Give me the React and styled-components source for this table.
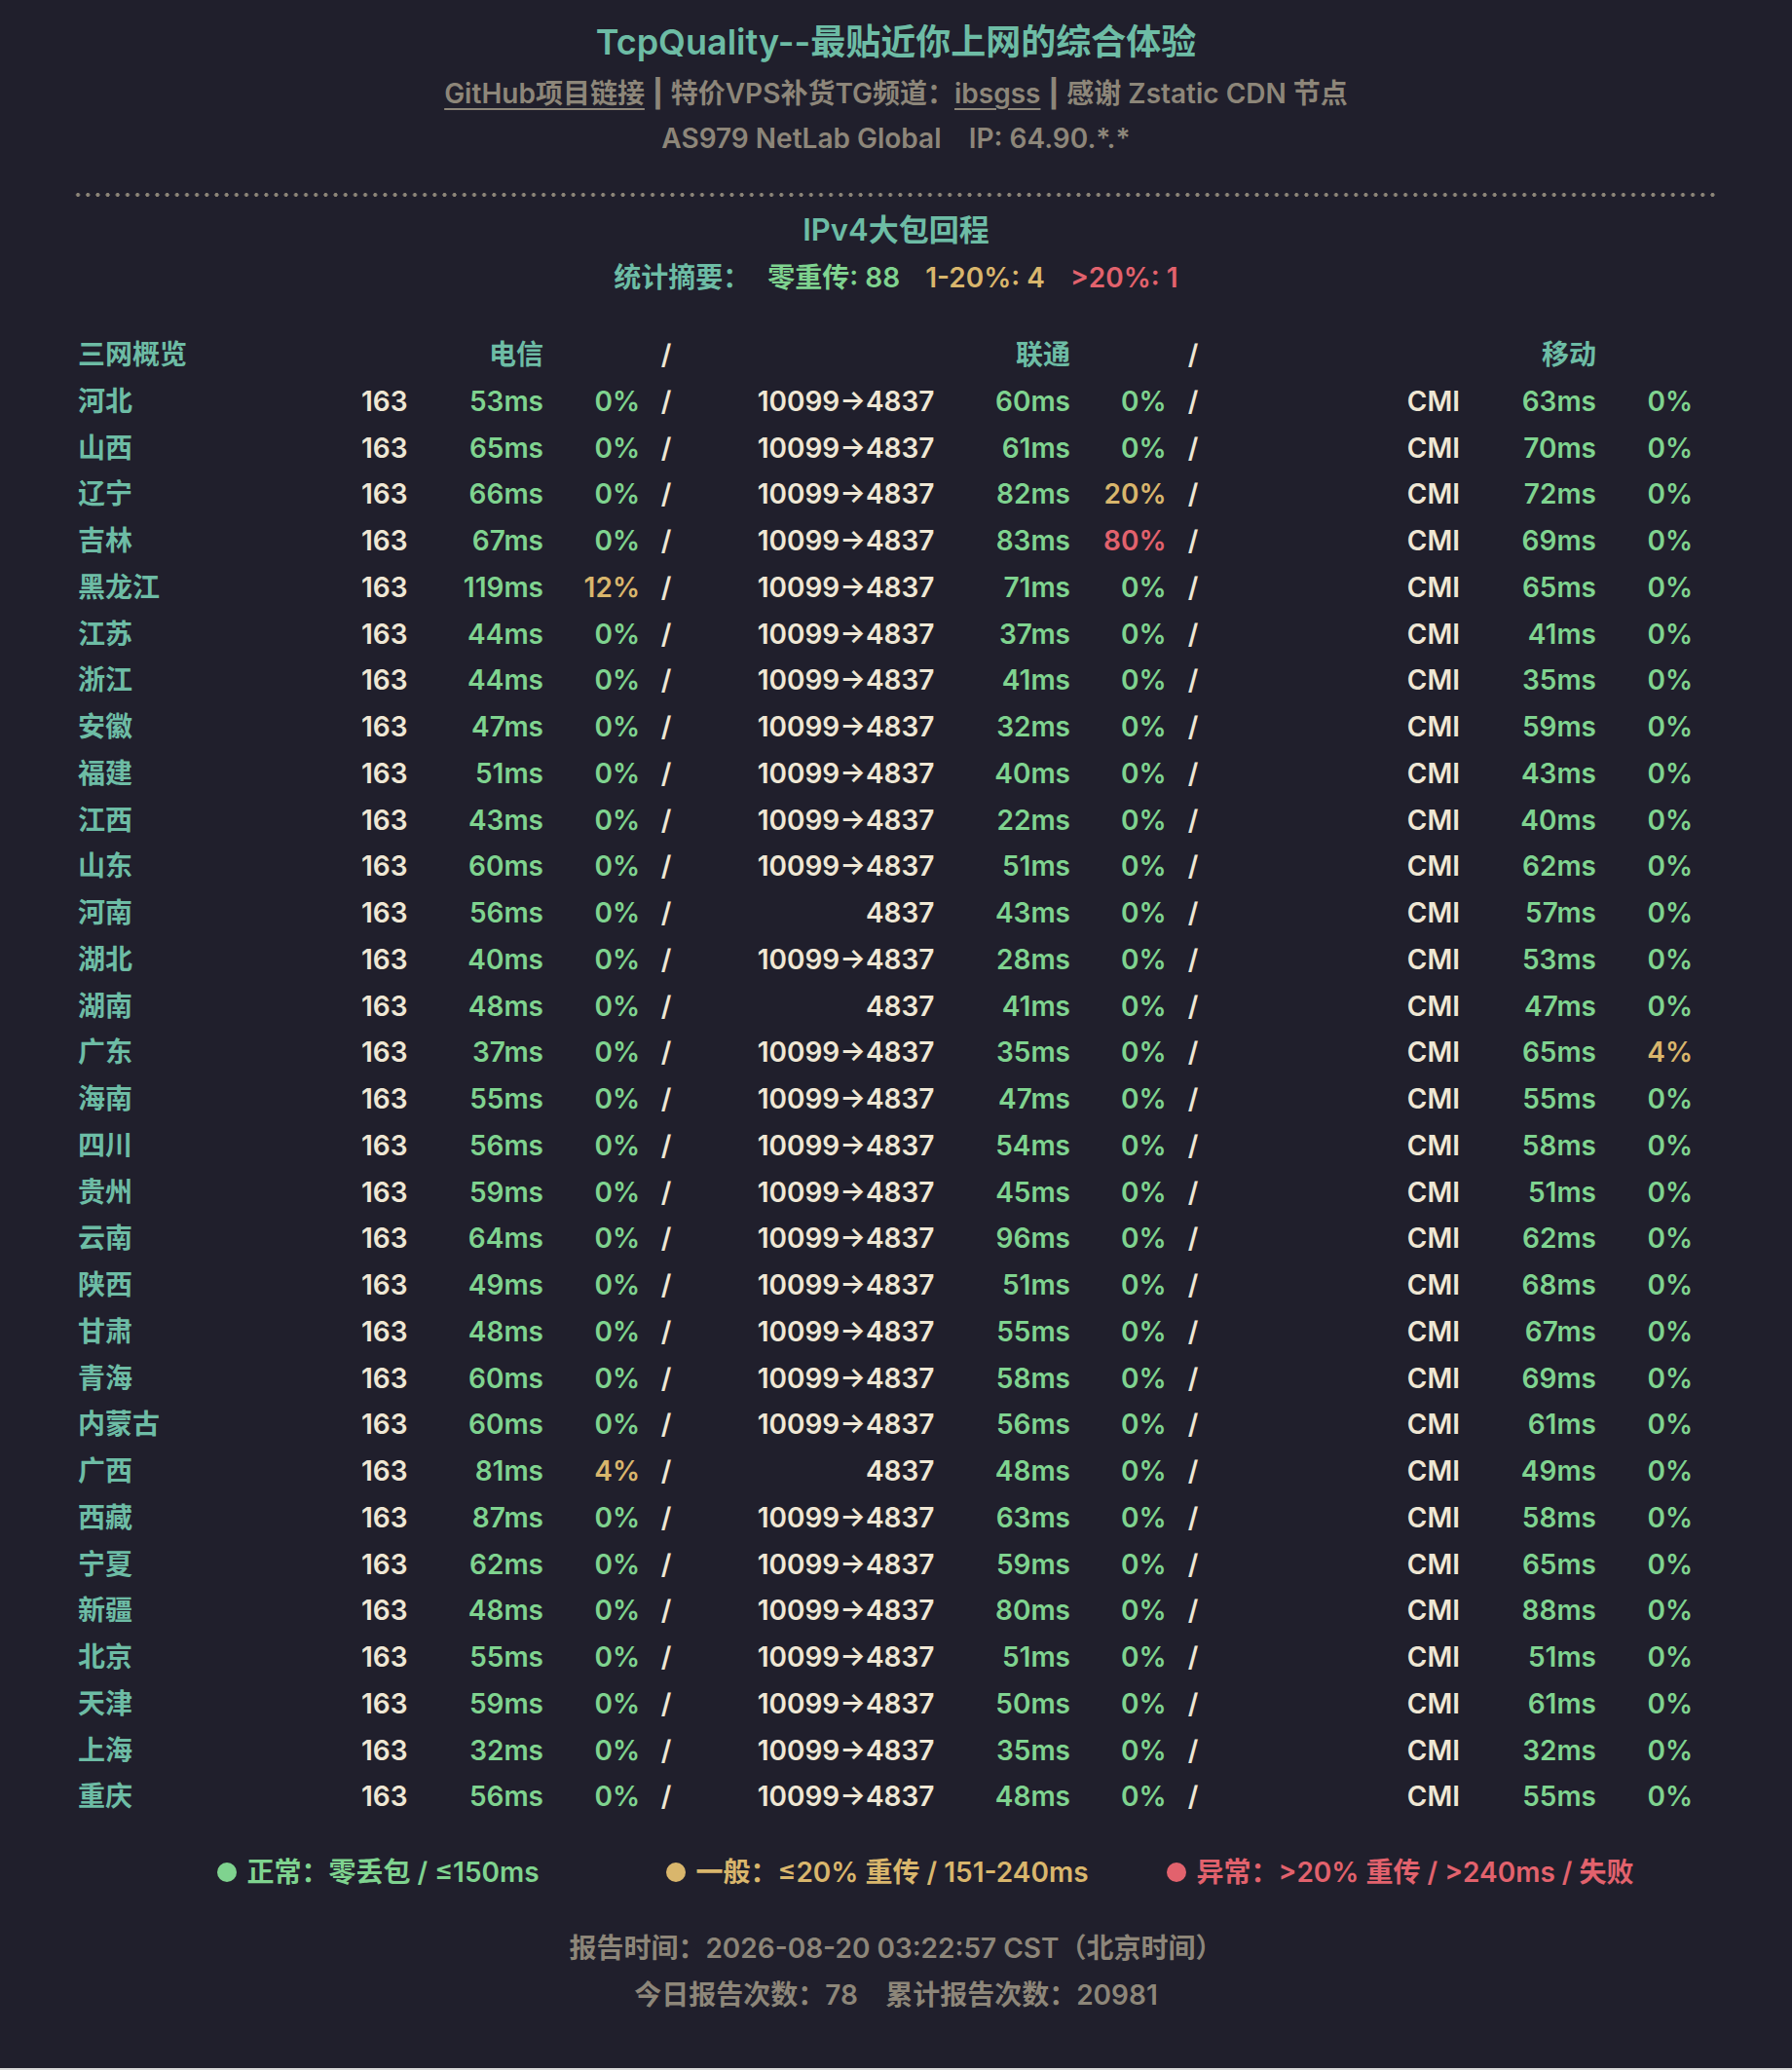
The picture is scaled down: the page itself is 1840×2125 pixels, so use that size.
import React from "react";
import styled, { createGlobalStyle } from "styled-components";

const C = {
  bg: "#201f2c",
  teal: "#6dbca5",
  cream: "#efe7d4",
  green: "#7fd38f",
  yellow: "#d9b66c",
  red: "#e2626d",
  gray: "#8d8679",
};

const Global = createGlobalStyle`
  html, body { margin: 0; padding: 0; background: #d9d9d9; }
  body {
    font-family: "Inter", "Noto Sans CJK SC", sans-serif;
    -webkit-font-smoothing: antialiased;
  }
`;

const Page = styled.div`
  background: ${C.bg};
  height: 2123px;
  box-sizing: border-box;
  padding-top: 19px;
  display: flex;
  flex-direction: column;
  align-items: center;
  font-weight: 600;
`;

const Title = styled.h1`
  margin: 0;
  font-size: 36px;
  line-height: 48px;
  font-weight: 600;
  color: ${C.teal};
`;

const InfoLine = styled.div`
  margin-top: ${(p) => p.$mt || 0}px;
  font-size: 28px;
  line-height: 44px;
  color: ${C.gray};
  white-space: pre;
`;

const Link = styled.a`
  color: ${C.gray};
  text-decoration: underline;
  text-underline-offset: 5px;
  text-decoration-thickness: 2px;
`;

const Bar = styled.span`
  margin: 0 8px;
  font-weight: 800;
`;

const Divider = styled.div`
  align-self: stretch;
  margin: 34px 79px 0 75px;
  height: 4px;
  background-image: radial-gradient(circle at center, ${C.gray} 1.7px, transparent 2.3px);
  background-size: 10.18px 4px;
  background-repeat: repeat-x;
`;

const Section = styled.h2`
  margin: 12px 0 0;
  font-size: 31px;
  line-height: 44px;
  font-weight: 600;
  color: ${C.teal};
`;

const Summary = styled.div`
  margin-top: 5px;
  display: flex;
  gap: 26px;
  font-size: 28px;
  line-height: 44px;
`;

const Tone = styled.span`
  color: ${(p) => C[p.$tone] || C.cream};
  margin-right: ${(p) => p.$pull || 0}px;
`;

const Table = styled.div`
  margin-top: 34px;
  align-self: stretch;
  padding-left: 80px;
`;

const Row = styled.div`
  display: grid;
  grid-template-columns: 220px 118.5px 139.5px 99px 54px 248.5px 139.5px 98.5px 55px 246.5px 140px 99px;
  height: 47.75px;
  line-height: 47.75px;
  font-size: 28px;
  white-space: nowrap;
`;

const Cell = styled.div`
  text-align: ${(p) => p.$align || "right"};
  color: ${(p) => C[p.$tone] || C.cream};
`;

const Legend = styled.div`
  margin-top: 31px;
  padding-left: 60px;
  display: flex;
  font-size: 28px;
  line-height: 44px;
`;

const LegendItem = styled.div`
  display: flex;
  align-items: center;
  color: ${(p) => C[p.$tone]};
  margin-right: ${(p) => p.$gap || 0}px;
`;

const Dot = styled.span`
  width: 20px;
  height: 20px;
  border-radius: 50%;
  background: ${(p) => C[p.$tone]};
  margin-right: 11px;
`;

const FootLine = styled.div`
  margin-top: ${(p) => p.$mt}px;
  font-size: 28px;
  line-height: 44px;
  color: ${C.gray};
  white-space: pre;
`;

const raw = `河北|53|0|1|60|0|63|0
山西|65|0|1|61|0|70|0
辽宁|66|0|1|82|20|72|0
吉林|67|0|1|83|80|69|0
黑龙江|119|12|1|71|0|65|0
江苏|44|0|1|37|0|41|0
浙江|44|0|1|41|0|35|0
安徽|47|0|1|32|0|59|0
福建|51|0|1|40|0|43|0
江西|43|0|1|22|0|40|0
山东|60|0|1|51|0|62|0
河南|56|0|0|43|0|57|0
湖北|40|0|1|28|0|53|0
湖南|48|0|0|41|0|47|0
广东|37|0|1|35|0|65|4
海南|55|0|1|47|0|55|0
四川|56|0|1|54|0|58|0
贵州|59|0|1|45|0|51|0
云南|64|0|1|96|0|62|0
陕西|49|0|1|51|0|68|0
甘肃|48|0|1|55|0|67|0
青海|60|0|1|58|0|69|0
内蒙古|60|0|1|56|0|61|0
广西|81|4|0|48|0|49|0
西藏|87|0|1|63|0|58|0
宁夏|62|0|1|59|0|65|0
新疆|48|0|1|80|0|88|0
北京|55|0|1|51|0|51|0
天津|59|0|1|50|0|61|0
上海|32|0|1|35|0|32|0
重庆|56|0|1|48|0|55|0`;

const rows = raw.split("\n").map((l) => {
  const [name, t, tl, via, u, ul, m, ml] = l.split("|");
  return { name, t, tl: +tl, via: via === "1", u, ul: +ul, m, ml: +ml };
});

const lossTone = (v) => (v === 0 ? "green" : v <= 20 ? "yellow" : "red");

export default function App() {
  return (
    <>
      <Global />
      <Page>
        <Title>TcpQuality--最贴近你上网的综合体验</Title>
        <InfoLine $mt={7}>
          <Link>GitHub项目链接</Link>
          <Bar>|</Bar>特价VPS补货TG频道：<Link>ibsgss</Link>
          <Bar>|</Bar>感谢 Zstatic CDN 节点
        </InfoLine>
        <InfoLine $mt={2}>{"AS979 NetLab Global    IP: 64.90.*.*"}</InfoLine>
        <Divider />
        <Section>IPv4大包回程</Section>
        <Summary>
          <Tone $tone="teal" $pull={-8}>统计摘要：</Tone>
          <Tone $tone="green">零重传: 88</Tone>
          <Tone $tone="yellow">1-20%: 4</Tone>
          <Tone $tone="red">&gt;20%: 1</Tone>
        </Summary>
        <Table>
          <Row>
            <Cell $align="left" $tone="teal">三网概览</Cell>
            <Cell />
            <Cell $tone="teal">电信</Cell>
            <Cell />
            <Cell $align="center">/</Cell>
            <Cell />
            <Cell $tone="teal">联通</Cell>
            <Cell />
            <Cell $align="center">/</Cell>
            <Cell />
            <Cell $tone="teal">移动</Cell>
            <Cell />
          </Row>
          {rows.map((r) => (
            <Row key={r.name}>
              <Cell $align="left" $tone="teal">{r.name}</Cell>
              <Cell>163</Cell>
              <Cell $tone="green">{r.t}ms</Cell>
              <Cell $tone={lossTone(r.tl)}>{r.tl}%</Cell>
              <Cell $align="center">/</Cell>
              <Cell>{r.via ? "10099→4837" : "4837"}</Cell>
              <Cell $tone="green">{r.u}ms</Cell>
              <Cell $tone={lossTone(r.ul)}>{r.ul}%</Cell>
              <Cell $align="center">/</Cell>
              <Cell>CMI</Cell>
              <Cell $tone="green">{r.m}ms</Cell>
              <Cell $tone={lossTone(r.ml)}>{r.ml}%</Cell>
            </Row>
          ))}
        </Table>
        <Legend>
          <LegendItem $tone="green" $gap={130}>
            <Dot $tone="green" />正常：零丢包 / ≤150ms
          </LegendItem>
          <LegendItem $tone="yellow" $gap={80}>
            <Dot $tone="yellow" />一般：≤20% 重传 / 151-240ms
          </LegendItem>
          <LegendItem $tone="red">
            <Dot $tone="red" />异常：&gt;20% 重传 / &gt;240ms / 失败
          </LegendItem>
        </Legend>
        <FootLine $mt={34}>报告时间：2026-08-20 03:22:57 CST（北京时间）</FootLine>
        <FootLine $mt={4}>{"今日报告次数：78    累计报告次数：20981"}</FootLine>
      </Page>
    </>
  );
}
